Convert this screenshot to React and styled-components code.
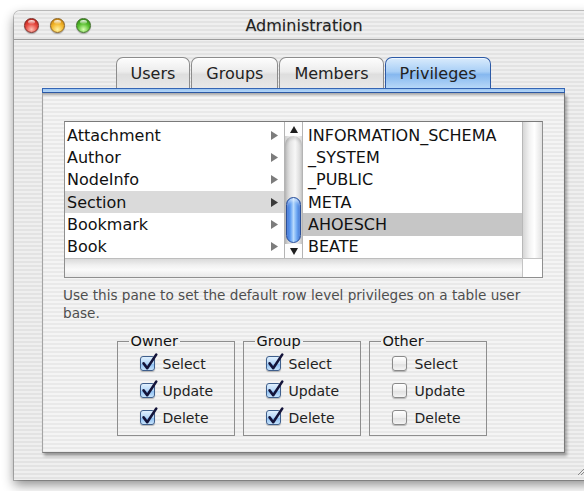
import React from "react"
import styled, { createGlobalStyle, css } from "styled-components"

const GlobalStyle = createGlobalStyle`
  html, body {
    margin: 0;
    background: #fff;
  }
  body {
    font-family: "DejaVu Sans", "Liberation Sans", sans-serif;
    overflow: hidden;
  }
`

const pinstripe = (a, b) => css`
  background: repeating-linear-gradient(to bottom, ${a} 0px, ${a} 2px, ${b} 2px, ${b} 4px);
`

const Desktop = styled.div`
  width: 584px;
  height: 491px;
  overflow: hidden;
  padding: 11px 0 0 14px;
  box-sizing: border-box;
`

const Window = styled.div`
  position: relative;
  width: 580px;
  height: 469px;
  ${pinstripe("#efefef", "#e3e3e3")}
  border-radius: 6px 6px 0 0;
  box-shadow: 0 0 0 1px rgba(0, 0, 0, 0.22), 0 5px 12px rgba(0, 0, 0, 0.45);
  display: flex;
  flex-direction: column;
`

const TitleBar = styled.div`
  height: 28px;
  border-bottom: 1px solid #9c9c9c;
  display: grid;
  grid-template-columns: 1fr auto 1fr;
  align-items: center;
`

const Lights = styled.div`
  display: flex;
  gap: 11px;
  padding-left: 10px;
`

const lightColors = {
  red: ["#ffc0b4", "#e5463d", "#a8170f", "#7c2a25"],
  yellow: ["#fff2a0", "#f2b428", "#b8720a", "#8a6220"],
  green: ["#d6ffb0", "#55bd2c", "#2a7c10", "#3f6e28"],
}

const Light = styled.span`
  position: relative;
  width: 15px;
  height: 15px;
  border-radius: 50%;
  box-sizing: border-box;
  border: 1px solid ${p => lightColors[p.$color][3]};
  background: radial-gradient(circle at 50% 80%, ${p => lightColors[p.$color][0]} 0%, ${p => lightColors[p.$color][1]} 50%, ${p => lightColors[p.$color][2]} 100%);
  box-shadow: 0 1px 1px rgba(0, 0, 0, 0.3);

  &::after {
    content: "";
    position: absolute;
    left: 3px;
    top: 1px;
    width: 7px;
    height: 4px;
    border-radius: 50%;
    background: linear-gradient(rgba(255, 255, 255, 0.95), rgba(255, 255, 255, 0.1));
  }
`

const Title = styled.div`
  font-size: 16px;
  color: #222;
  text-shadow: 0 1px 1px rgba(0, 0, 0, 0.2);
`

const Body = styled.div`
  padding: 17px 29px 0 28px;
  display: flex;
  flex-direction: column;
`

const Tabs = styled.div`
  display: flex;
  justify-content: center;
  gap: 1px;
  height: 31px;
`

const Tab = styled.div`
  display: flex;
  align-items: center;
  padding: 1px 14px 0;
  font-size: 16px;
  color: #222;
  box-sizing: border-box;
  border: 1px solid #8c8c8c;
  border-bottom: none;
  border-radius: 7px 7px 0 0;
  background: linear-gradient(#fdfdfd, #ececec 45%, #dedede 55%, #e8e8e8);
  box-shadow: inset 0 1px 0 #fff;

  ${p => p.$active && css`
    border-color: #2d5aa6;
    background: linear-gradient(#d9ebfc, #a9cff6 45%, #86b8ef 55%, #b7d8f8);
    box-shadow: inset 0 1px 0 #eef6ff;
  `}
`

const TabLine = styled.div`
  height: 5px;
  box-sizing: border-box;
  border: 1px solid #3465b4;
  border-bottom-color: #2b58a4;
  background: linear-gradient(#9cc6f2, #b2d5f8);
`

const Panel = styled.div`
  ${pinstripe("#f4f4f4", "#e9e9e9")}
  border-left: 1px solid #a4a4a4;
  border-right: 1px solid #7a7a7a;
  border-bottom: 1px solid #7a7a7a;
  box-shadow: inset 0 3px 2px -1px rgba(0, 0, 0, 0.3), 2px 3px 3px rgba(0, 0, 0, 0.32);
  padding: 28px 21px 16px 21px;
  display: flex;
  flex-direction: column;
`

const Browser = styled.div`
  height: 157px;
  box-sizing: border-box;
  border: 1px solid #8f8f8f;
  border-top-color: #7a7a7a;
  display: grid;
  grid-template-columns: 219px 19px 1fr 20px;
  grid-template-rows: 1fr 19px;
  background: #fff;
`

const List = styled.div`
  padding-top: 2px;
  display: flex;
  flex-direction: column;
  overflow: hidden;
`

const Row = styled.div`
  height: 22.5px;
  display: flex;
  align-items: center;
  justify-content: space-between;
  padding: 0 6px 0 ${p => (p.$inset ? 5 : 2)}px;
  font-size: 16px;
  color: #111;
  background: ${p => p.$selected || "transparent"};
`

const Arrow = ({ dark }) => (
  <svg width="7" height="9" viewBox="0 0 7 9">
    <polygon points="0,0 7,4.5 0,9" fill={dark ? "#3a3a3a" : "#7c7c7c"} />
  </svg>
)

const ScrollBar = styled.div`
  display: flex;
  flex-direction: column;
  border-left: 1px solid #b4b4b4;
  border-right: 1px solid #b4b4b4;
  background: linear-gradient(to right, #cfcfcf, #f2f2f2 35%, #ffffff 60%, #dadada);
`

const ArrowButton = styled.div`
  height: 14px;
  display: flex;
  align-items: center;
  justify-content: center;
  background: #fdfdfd;
`

const Track = styled.div`
  flex: 1;
  display: flex;
  flex-direction: column;
  justify-content: flex-end;
  align-items: center;
  border-radius: 9px 9px 0 0;
  background: linear-gradient(to right, #bdbdbd, #e4e4e4 30%, #f7f7f7 60%, #cfcfcf);
  box-shadow: inset 0 3px 3px rgba(0, 0, 0, 0.12);
  padding-bottom: 1px;
`

const Thumb = styled.div`
  width: 15px;
  height: 46px;
  box-sizing: border-box;
  border-radius: 8px;
  border: 1px solid #2a4f98;
  background: linear-gradient(to right, #2a62cc, #5f9df2 25%, #b8dafc 50%, #6ea8f4 75%, #2c66cc);
  box-shadow: inset 0 3px 3px rgba(255, 255, 255, 0.5);
`

const Caret = ({ up }) => (
  <svg width="8" height="7" viewBox="0 0 8 7">
    <polygon points={up ? "4,0 8,7 0,7" : "0,0 8,0 4,7"} fill="#1e1e1e" />
  </svg>
)

const VTrack = styled.div`
  border-left: 1px solid #b8b8b8;
  background: linear-gradient(to right, #d6d6d6, #f3f3f3 35%, #ffffff 60%, #e2e2e2);
`

const HTrack = styled.div`
  grid-column: 1 / 4;
  border-top: 1px solid #bdbdbd;
  background: linear-gradient(to bottom, #dadada, #f1f1f1 35%, #fafafa 60%, #e9e9e9);
`

const Corner = styled.div`
  border-top: 1px solid #c4c4c4;
  border-left: 1px solid #c4c4c4;
  background: #fff;
`

const Hint = styled.p`
  margin: 8px 0 0 -1px;
  font-size: 13.6px;
  line-height: 18px;
  color: #4e4e4e;
  width: 484px;
`

const Groups = styled.div`
  display: flex;
  justify-content: center;
  gap: 8px;
  margin: 11px 0 0 -4px;
`

const GroupBox = styled.fieldset`
  width: 118px;
  box-sizing: border-box;
  margin: 0;
  padding: 0 0 4px;
  border: 1px solid #8e8e8e;
  display: flex;
  flex-direction: column;

  legend {
    font-size: 14.5px;
    line-height: 17px;
    color: #111;
    padding: 0 2px;
    margin-left: 11px;
  }
`

const Option = styled.label`
  height: 27px;
  display: flex;
  align-items: center;
  gap: 8px;
  padding-left: 22px;
  font-size: 14px;
  color: #222;
`

const Box = styled.span`
  position: relative;
  width: 15px;
  height: 15px;
  box-sizing: border-box;
  border-radius: 3px;
  border: 1px solid ${p => (p.$checked ? "#3f5f8c" : "#8a8a8a")};
  background: ${p => (p.$checked
    ? "linear-gradient(#e0f0fe, #b4d6f7 50%, #8dbff2 55%, #c6e2fb)"
    : "linear-gradient(#ffffff, #eeeeee 50%, #e1e1e1 55%, #f4f4f4)")};
  box-shadow: 0 1px 1px rgba(0, 0, 0, 0.25);

  svg {
    position: absolute;
    left: 0;
    top: -4px;
  }
`

const Grip = styled.svg`
  position: absolute;
  right: 7px;
  bottom: 4px;
`

const Checkbox = ({ checked }) => (
  <Box $checked={checked}>
    {checked && (
      <svg width="17" height="18" viewBox="0 0 17 18">
        <path d="M2.6 10.4 L6.2 15.2 L15.2 1.6" fill="none" stroke="#14143a" strokeWidth="2.6" strokeLinecap="round" strokeLinejoin="round" />
      </svg>
    )}
  </Box>
)

const tables = ["Attachment", "Author", "NodeInfo", "Section", "Bookmark", "Book"]
const users = ["INFORMATION_SCHEMA", "_SYSTEM", "_PUBLIC", "META", "AHOESCH", "BEATE"]
const groups = [
  { name: "Owner", on: true },
  { name: "Group", on: true },
  { name: "Other", on: false },
]

export default function App() {
  return (
    <Desktop>
      <GlobalStyle />
      <Window>
        <TitleBar>
          <Lights>
            <Light $color="red" />
            <Light $color="yellow" />
            <Light $color="green" />
          </Lights>
          <Title>Administration</Title>
          <span />
        </TitleBar>

        <Body>
          <Tabs>
            <Tab>Users</Tab>
            <Tab>Groups</Tab>
            <Tab>Members</Tab>
            <Tab $active>Privileges</Tab>
          </Tabs>
          <TabLine />
          <Panel>
            <Browser>
              <List>
                {tables.map(t => (
                  <Row key={t} $selected={t === "Section" && "#dadada"}>
                    {t}
                    <Arrow dark={t === "Section"} />
                  </Row>
                ))}
              </List>
              <ScrollBar>
                <ArrowButton><Caret up /></ArrowButton>
                <Track><Thumb /></Track>
                <ArrowButton><Caret /></ArrowButton>
              </ScrollBar>
              <List>
                {users.map(u => (
                  <Row key={u} $inset $selected={u === "AHOESCH" && "#c6c6c6"}>
                    {u}
                  </Row>
                ))}
              </List>
              <VTrack />
              <HTrack />
              <Corner />
            </Browser>

            <Hint>
              Use this pane to set the default row level privileges on a table user base.
            </Hint>

            <Groups>
              {groups.map(g => (
                <GroupBox key={g.name}>
                  <legend>{g.name}</legend>
                  {["Select", "Update", "Delete"].map(op => (
                    <Option key={op}>
                      <Checkbox checked={g.on} />
                      {op}
                    </Option>
                  ))}
                </GroupBox>
              ))}
            </Groups>
          </Panel>
        </Body>

        <Grip width="10" height="10" viewBox="0 0 10 10">
          <path d="M9 1 L1 9 M9 4 L4 9 M9 7 L7 9" stroke="#8a8a8a" strokeWidth="1" />
        </Grip>
      </Window>
    </Desktop>
  )
}
